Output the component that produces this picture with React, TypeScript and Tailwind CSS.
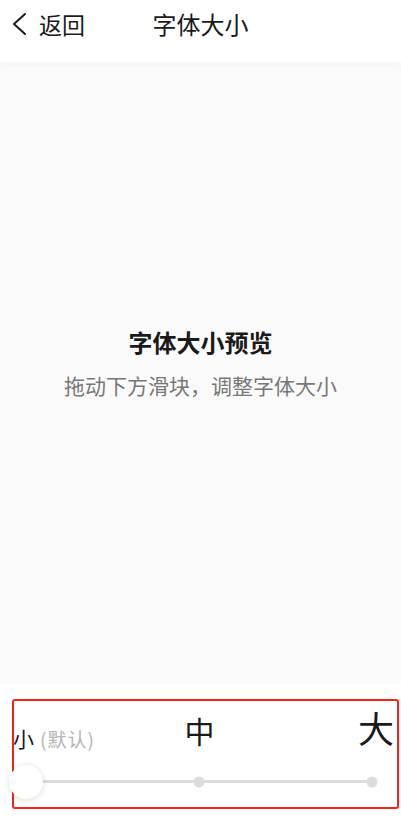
import React, { useState } from "react";

const levels = ["小", "中", "大"];

const App: React.FC = () => {
  const [level] = useState(0);

  return (
    <div
      className="flex h-screen w-full flex-col bg-white text-[#1a1a1a]"
      style={{ fontFamily: '"Noto Sans CJK SC", "Noto Sans", sans-serif' }}
    >
      {/* Header */}
      <header className="relative z-10 h-[62px] shrink-0 bg-white shadow-[0_2px_6px_rgba(0,0,0,0.04)]">
        <div className="relative flex h-[48px] items-center">
          <button className="flex items-center pl-[12px] text-[23px] leading-none text-[#1a1a1a]">
            <svg width="16" height="24" viewBox="0 0 16 24" fill="none" className="mr-[11px]">
              <path d="M13 2L2 12l11 10" stroke="#1a1a1a" strokeWidth="2" strokeLinecap="round" strokeLinejoin="round" />
            </svg>
            返回
          </button>
          <h1 className="absolute left-1/2 top-1/2 -translate-x-[48px] -translate-y-1/2 text-[24px] font-normal leading-none">
            字体大小
          </h1>
        </div>
      </header>

      {/* Preview */}
      <main className="flex flex-1 flex-col items-center justify-center bg-[#fafafa] pb-[20px]">
        <h2 className="text-[24px] font-bold leading-none">字体大小预览</h2>
        <p className="mt-[21px] text-[21px] leading-none text-[#777]">拖动下方滑块，调整字体大小</p>
      </main>

      {/* Slider */}
      <section className="h-[147px] shrink-0 bg-white pt-[15px]">
        <div className="ml-[12px] mr-[2px] h-[110px] rounded-[3px] border-2 border-[#f5221b]">
          <div className="flex items-end pl-0 pr-[3px] pt-[8px]">
            <div className="-mb-[4px] -ml-[1px] flex flex-1 items-baseline leading-none">
              <span className="text-[21px]">小</span>
              <span className="ml-[6px] text-[19px] tracking-[1px] text-[#b5b5b5]">(默认)</span>
            </div>
            <div className="-translate-x-[4px] text-[30px] leading-none">中</div>
            <div className="flex-1 text-right text-[36px] leading-none">大</div>
          </div>

          <div className="relative mx-[12px] mt-[35px] h-[3px] w-[346px] bg-[#dddddd]">
            {levels.map((l, i) => (
              <span
                key={l}
                className="absolute top-1/2 h-[11px] w-[11px] -translate-x-1/2 -translate-y-1/2 rounded-full bg-[#dcdcdc]"
                style={{ left: `${i * 50}%` }}
              />
            ))}
            <span
              className="absolute top-1/2 h-[34px] w-[34px] -translate-x-1/2 -translate-y-1/2 rounded-full bg-white shadow-[0_1px_6px_rgba(0,0,0,0.15)]"
              style={{ left: `${level * 50}%` }}
            />
          </div>
        </div>
      </section>
    </div>
  );
};

export default App;
